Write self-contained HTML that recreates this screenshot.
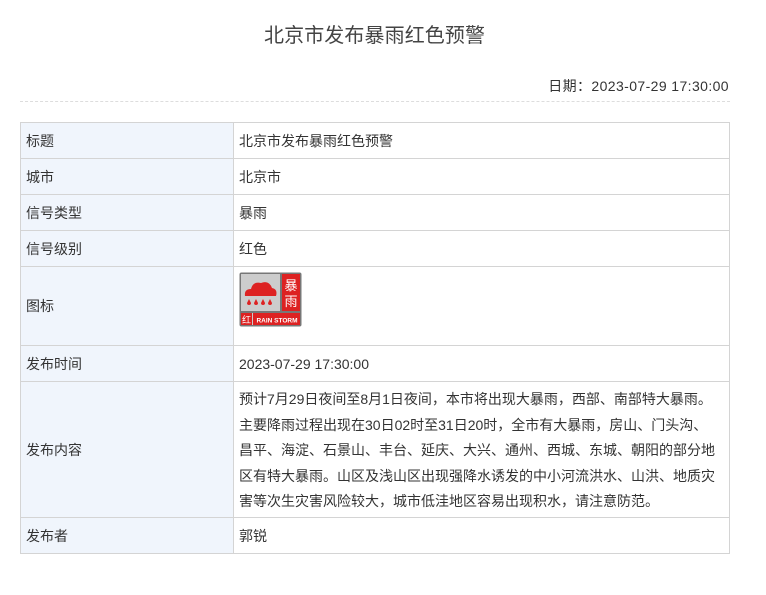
<html><head><style>
body{margin:0;background:#fff;font-family:"Liberation Sans","Noto Sans CJK SC",sans-serif;color:#333;width:766px;height:595px;position:relative}
h1{position:absolute;top:22px;left:264px;margin:0;font-size:20px;font-weight:normal;color:#444;line-height:28px;letter-spacing:0.1px}
.date{position:absolute;top:76px;right:37px;font-size:14px;line-height:20px;color:#333;letter-spacing:0.4px}
.dash{position:absolute;top:101px;left:20px;width:710px;border-top:1px dashed #ddd}
table{position:absolute;top:122px;left:20px;width:710px;border-collapse:collapse;font-size:14px}
td{border:1px solid #d4d4d4;padding:0 5px;line-height:24px}
td.k{background:#f0f5fc;width:202px}
</style></head><body>
<h1>北京市发布暴雨红色预警</h1>
<div class="date">日期：2023-07-29 17:30:00</div>
<div class="dash"></div>
<table>
<tr style="height:36px"><td class="k">标题</td><td>北京市发布暴雨红色预警</td></tr>
<tr style="height:36px"><td class="k">城市</td><td>北京市</td></tr>
<tr style="height:36px"><td class="k">信号类型</td><td>暴雨</td></tr>
<tr style="height:36px"><td class="k">信号级别</td><td>红色</td></tr>
<tr style="height:79px"><td class="k">图标</td><td style="vertical-align:top;padding-top:5px">
<svg width="63" height="55" viewBox="0 0 63 55" style="display:block">
<rect x="0.5" y="0.5" width="62" height="54" rx="2" fill="#777"/>
<rect x="2" y="2" width="39" height="37" fill="#ccc"/>
<path d="M6 24 Q5 17 12 17 Q14 9 22 11 Q30 8 33 16 Q39 17 37 24 Z" fill="#d22"/>
<g fill="#d22"><path d="M10 27 l-2 4 a2 2 0 0 0 4 0z"/><path d="M17 27 l-2 4 a2 2 0 0 0 4 0z"/><path d="M24 27 l-2 4 a2 2 0 0 0 4 0z"/><path d="M31 27 l-2 4 a2 2 0 0 0 4 0z"/></g>
<rect x="43" y="2" width="18" height="37" fill="#d22"/>
<text x="52" y="18" font-size="13" fill="#fff" text-anchor="middle" font-family="Noto Sans CJK SC">暴</text>
<text x="52" y="34" font-size="13" fill="#fff" text-anchor="middle" font-family="Noto Sans CJK SC">雨</text>
<rect x="2" y="41" width="59" height="12" fill="#d22"/>
<rect x="13" y="41" width="1" height="12" fill="#ccc"/>
<text x="3" y="51" font-size="9" fill="#fff" font-family="Noto Sans CJK SC">红</text>
<text x="38" y="50.5" font-size="6.5" font-weight="bold" fill="#fff" text-anchor="middle">RAIN STORM</text>
</svg></td></tr>
<tr style="height:36px"><td class="k">发布时间</td><td>2023-07-29 17:30:00</td></tr>
<tr style="height:136px"><td class="k">发布内容</td><td style="line-height:25.5px;font-size:14px;padding-top:3px;padding-right:8px;white-space:nowrap">预计7月29日夜间至8月1日夜间，本市将出现大暴雨，西部、南部特大暴雨。<br>主要降雨过程出现在30日02时至31日20时，全市有大暴雨，房山、门头沟、<br>昌平、海淀、石景山、丰台、延庆、大兴、通州、西城、东城、朝阳的部分地<br>区有特大暴雨。山区及浅山区出现强降水诱发的中小河流洪水、山洪、地质灾<br>害等次生灾害风险较大，城市低洼地区容易出现积水，请注意防范。</td></tr>
<tr style="height:36px"><td class="k">发布者</td><td>郭锐</td></tr>
</table>
</body></html>
